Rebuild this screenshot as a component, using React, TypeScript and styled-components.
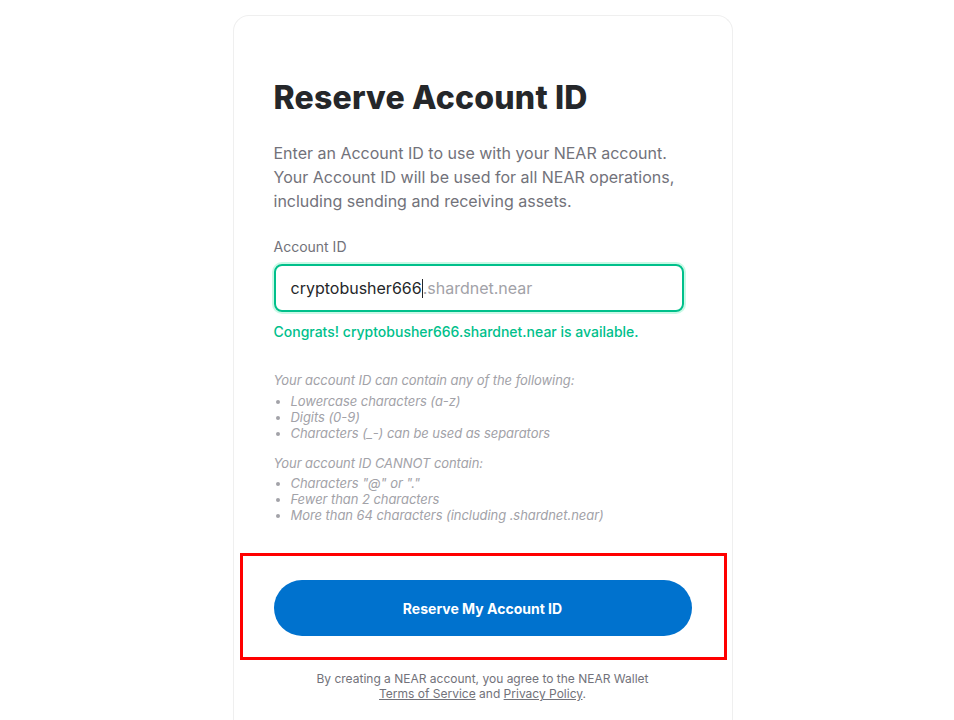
import React from "react";
import styled, { createGlobalStyle } from "styled-components";

const GlobalStyle = createGlobalStyle`
  body {
    margin: 0;
    background: #fff;
    font-family: Inter, "Noto Sans", sans-serif;
  }
`;

const Page = styled.div`
  display: flex;
  justify-content: center;
  padding: 15px 0 0 11px;
`;

const Card = styled.div`
  width: 500px;
  box-sizing: border-box;
  border: 1px solid #efefef;
  border-bottom: none;
  border-radius: 16px 16px 0 0;
  padding: 63px 40px 40px;
`;

const Title = styled.h1`
  margin: 0;
  font-size: 32px;
  line-height: 38px;
  font-weight: 800;
  color: #25272a;
  letter-spacing: 0.2px;
`;

const Intro = styled.p`
  margin: 24px 0 0;
  font-size: 16px;
  line-height: 24px;
  color: #72727a;
`;

const Label = styled.label`
  display: block;
  margin-top: 24px;
  font-size: 14px;
  line-height: 20px;
  color: #72727a;
`;

const InputBox = styled.div`
  margin-top: 7px;
  width: 410px;
  height: 48px;
  box-sizing: border-box;
  border: 2px solid #00c08b;
  border-radius: 8px;
  box-shadow: 0 0 0 2px #c9f9e6;
  display: flex;
  align-items: center;
  padding-left: 15px;
  font-size: 16px;
  color: #25272a;
`;

const Caret = styled.span`
  display: inline-block;
  width: 1px;
  height: 19px;
  background: #25272a;
`;

const Suffix = styled.span`
  color: #a2a2a8;
`;

const Success = styled.div`
  margin-top: 10px;
  font-size: 14px;
  line-height: 20px;
  font-weight: 500;
  color: #00c08b;
`;

const Rules = styled.div`
  margin-top: 30px;
  font-size: 13px;
  line-height: 16px;
  font-style: italic;
  color: #a2a2a8;
  letter-spacing: -0.06px;
`;

const RuleHeading = styled.div<{ $first?: boolean }>`
  margin-top: ${(p) => (p.$first ? "0" : "14px")};
`;

const RuleList = styled.ul<{ $tight?: boolean }>`
  margin: ${(p) => (p.$tight ? "4px" : "5px")} 0 0;
  padding-left: 17px;
`;

const ButtonFrame = styled.div`
  margin: 30px -35px 0 -34px;
  border: 3px solid #ff0000;
  padding: 24px 32px 21px 31px;
`;

const Button = styled.button`
  width: 100%;
  height: 56px;
  border: none;
  border-radius: 28px;
  background: #0072ce;
  color: #fff;
  font-family: Inter, "Noto Sans", sans-serif;
  font-size: 14px;
  font-weight: 700;
`;

const Footer = styled.p`
  margin: 11px 0 0;
  text-align: center;
  font-size: 12px;
  line-height: 15px;
  color: #72727a;
`;

const FooterLink = styled.a`
  color: #72727a;
  text-decoration: underline;
`;

const App: React.FC = () => {
  const allowed = [
    "Lowercase characters (a-z)",
    "Digits (0-9)",
    "Characters (_-) can be used as separators",
  ];
  const forbidden = [
    'Characters "@" or "."',
    "Fewer than 2 characters",
    "More than 64 characters (including .shardnet.near)",
  ];

  return (
    <>
      <GlobalStyle />
      <Page>
        <Card>
          <Title>Reserve Account ID</Title>
          <Intro>
            Enter an Account ID to use with your NEAR account. Your Account ID
            will be used for all NEAR operations, including sending and
            receiving assets.
          </Intro>
          <Label>Account ID</Label>
          <InputBox>
            cryptobusher666
            <Caret />
            <Suffix>.shardnet.near</Suffix>
          </InputBox>
          <Success>Congrats! cryptobusher666.shardnet.near is available.</Success>
          <Rules>
            <RuleHeading $first>
              Your account ID can contain any of the following:
            </RuleHeading>
            <RuleList>
              {allowed.map((r) => (
                <li key={r}>{r}</li>
              ))}
            </RuleList>
            <RuleHeading>Your account ID CANNOT contain:</RuleHeading>
            <RuleList $tight>
              {forbidden.map((r) => (
                <li key={r}>{r}</li>
              ))}
            </RuleList>
          </Rules>
          <ButtonFrame>
            <Button>Reserve My Account ID</Button>
          </ButtonFrame>
          <Footer>
            By creating a NEAR account, you agree to the NEAR Wallet
            <br />
            <FooterLink href="#">Terms of Service</FooterLink> and{" "}
            <FooterLink href="#">Privacy Policy</FooterLink>.
          </Footer>
        </Card>
      </Page>
    </>
  );
};

export default App;
